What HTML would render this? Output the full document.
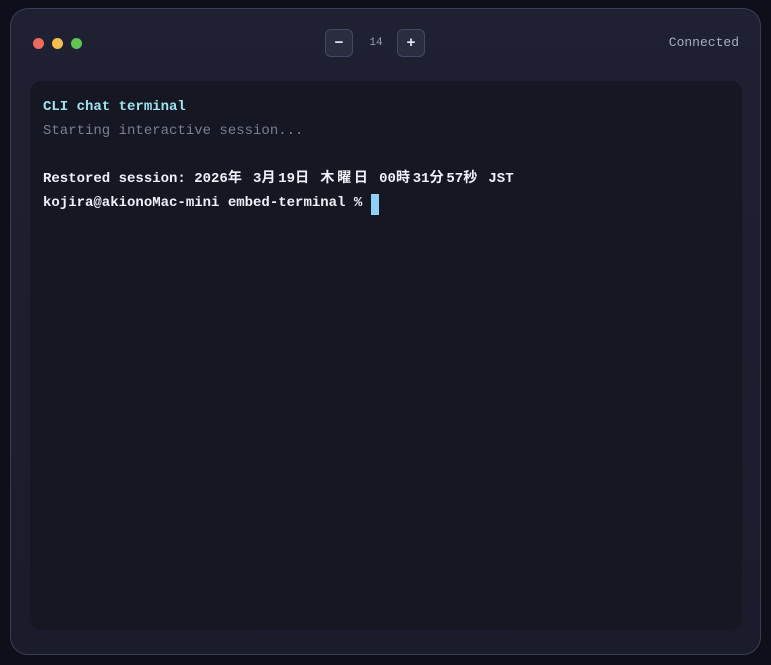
<!DOCTYPE html>
<html><head><style>
html,body{margin:0;padding:0;width:771px;height:665px;overflow:hidden;background:#0e0f1a;font-family:"Liberation Mono","Noto Sans CJK JP",monospace;}
.win{position:absolute;left:10px;top:8px;width:749px;height:645px;border:1px solid #3a3d58;border-radius:18px;background:linear-gradient(#1f2133,#1a1b2b);}
.dot{position:absolute;top:29px;width:11px;height:11px;border-radius:50%;}
.btn{position:absolute;top:20px;width:26px;height:26px;border:1px solid #444862;border-radius:6px;background:#2a2c40;color:#e6e8f2;font:bold 15px "Liberation Sans",sans-serif;text-align:center;line-height:26px;}
.term{position:absolute;left:19px;top:72px;width:712px;height:549px;border-radius:11px;background:#151723;}
.l{position:absolute;left:13px;font-size:14px;font-weight:bold;color:#f0f1f6;white-space:pre;line-height:16px;height:16px;}
.j{letter-spacing:2.8px;}
</style></head><body>
<div class="win">
<div class="dot" style="left:22px;background:#ec6a5e"></div>
<div class="dot" style="left:41px;background:#f4bf4f"></div>
<div class="dot" style="left:60px;background:#61c554"></div>
<div class="btn" style="left:314px">−</div>
<div style="position:absolute;left:352px;top:28px;width:26px;text-align:center;font-size:11px;color:#9a9db4">14</div>
<div class="btn" style="left:386px">+</div>
<div style="position:absolute;right:21px;top:26px;font-size:13px;color:#a8abc0">Connected</div>
<div class="term">
<div class="l" style="top:18px;color:#9fe3f0">CLI chat terminal</div>
<div class="l" style="top:42px;color:#7b7e8e;font-weight:normal">Starting interactive session...</div>
<div class="l" style="top:90px">Restored session: 2026<span class="j">年</span> 3<span class="j">月</span>19<span class="j">日</span> <span class="j">木曜日</span> 00<span class="j">時</span>31<span class="j">分</span>57<span class="j">秒</span> JST</div>
<div class="l" style="top:114px">kojira@akionoMac-mini embed-terminal % </div>
<div style="position:absolute;left:341px;top:113px;width:8px;height:21px;background:#8fd0f6"></div>
</div>
</div>
</body></html>
